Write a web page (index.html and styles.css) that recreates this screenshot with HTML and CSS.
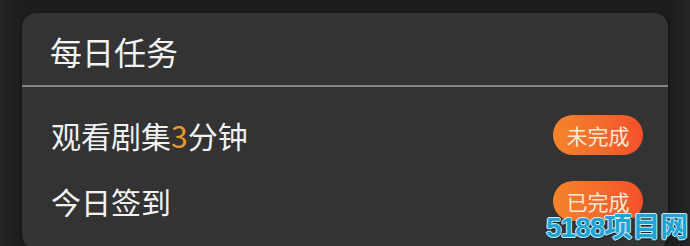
FILE: index.html
```html
<!DOCTYPE html>
<html lang="zh-CN">
<head>
<meta charset="utf-8">
<title>每日任务</title>
<link rel="stylesheet" href="styles.css">
</head>
<body>
<div class="page">
  <section class="card">
    <header class="card-head">每日任务</header>
    <div class="divider"></div>
    <ul class="tasks">
      <li class="task">
        <span class="task-name">观看剧集<em class="num">3</em>分钟</span>
        <span class="badge">未完成</span>
      </li>
      <li class="task">
        <span class="task-name">今日签到</span>
        <span class="badge">已完成</span>
      </li>
    </ul>
  </section>
  <div class="watermark"><span class="wm-digits">5188</span>项目网</div>
</div>
</body>
</html>
```

FILE: styles.css
```css
html, body {
  margin: 0;
  padding: 0;
}
body {
  width: 690px;
  height: 246px;
  overflow: hidden;
  background: #1f1f1f;
  font-family: "Noto Sans CJK SC", "Noto Sans", sans-serif;
  color: #f2f2f2;
}
.page {
  position: relative;
  width: 690px;
  height: 246px;
  padding-top: 13px;
  box-sizing: border-box;
  background: linear-gradient(90deg, #252525 0, #1d1d1d 20px, #1d1d1d 670px, #252525 690px);
}
.card {
  margin-left: 22px;
  width: 646px;
  height: 236px;
  background: #333333;
  border-radius: 14px;
  box-shadow: 0 0 3px rgba(0, 0, 0, 0.5);
}
.card-head {
  height: 72px;
  padding: 4px 0 0 28px;
  box-sizing: border-box;
  display: flex;
  align-items: center;
  font-size: 32px;
  line-height: 1;
  color: #f4f4f4;
}
.divider {
  height: 2px;
  background: #858585;
}
.tasks {
  list-style: none;
  margin: 0;
  padding: 15px 25px 0 29px;
}
.task {
  height: 66px;
  display: flex;
  align-items: center;
  justify-content: space-between;
}
.task-name {
  font-size: 30px;
  line-height: 1;
  color: #f2f2f2;
}
.num {
  font-style: normal;
  color: #ec9a2c;
}
.badge {
  width: 90px;
  height: 40px;
  border-radius: 20px;
  background: linear-gradient(90deg, #f5842b 0%, #f46a2b 55%, #f3502b 100%);
  color: #fde9d4;
  font-size: 21px;
  line-height: 40px;
  text-align: center;
}
.watermark {
  position: absolute;
  left: 546px;
  top: 211px;
  font-family: "Noto Sans CJK SC", sans-serif;
  font-weight: bold;
  font-size: 28px;
  line-height: 1;
  color: #1ea3d5;
  white-space: nowrap;
  text-shadow: 1px 0 0 #cfeef8, -1px 0 0 #cfeef8, 0 1px 0 #cfeef8, 0 -1px 0 #cfeef8, 1px 2px 1px #0a2a38;
}
.wm-digits {
  font-family: "Liberation Sans", sans-serif;
  letter-spacing: -1px;
}
```
